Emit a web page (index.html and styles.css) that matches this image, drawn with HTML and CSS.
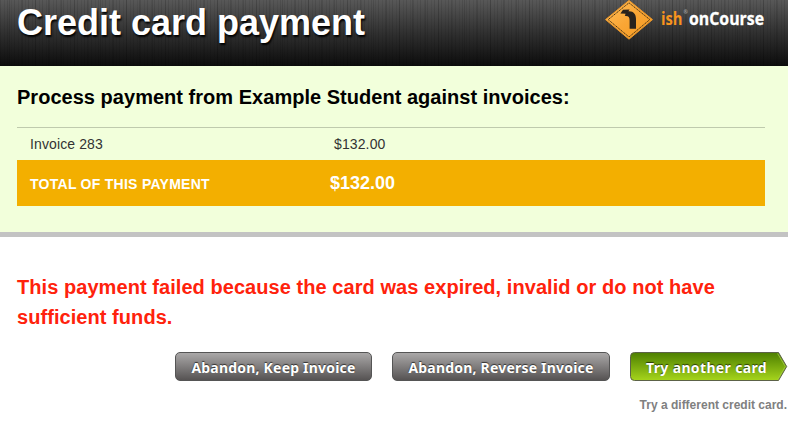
FILE: index.html
```html
<!DOCTYPE html>
<html lang="en">
<head>
<meta charset="utf-8">
<title>Credit card payment</title>
<link rel="stylesheet" href="styles.css">
</head>
<body>
<header class="header">
  <h1 class="title">Credit card payment</h1>
  <svg class="logo" width="166" height="44" viewBox="0 0 166 44" role="img" aria-label="ish onCourse">
    <defs>
      <linearGradient id="sign" x1="0" y1="0" x2="1" y2="1">
        <stop offset="0" stop-color="#ffc05c"/>
        <stop offset="0.5" stop-color="#faa635"/>
        <stop offset="1" stop-color="#f49a20"/>
      </linearGradient>
    </defs>
    <path d="M24 .8 47.5 20 24 39.6 .5 20Z" transform="translate(0 -.4)" fill="url(#sign)" stroke="#e8952a" stroke-width="1" stroke-linejoin="round"/>
    <path d="M24 2.8 44.8 19.6 24 37 3.2 19.6Z" fill="none" stroke="#4a3212" stroke-width="1" stroke-dasharray="1.5 .6"/>
    <path d="M15.4 13.4 18 9.8 24.6 9.4 23.4 11.2C28.4 10.8 31 14 31 19V28.8H24.6V20.5C24.6 17.4 23.6 16 21 16L19.8 15.8 20.6 13.8Z" fill="#29231d"/>
    <text class="logo-ish" x="56" y="25" textLength="21.5" lengthAdjust="spacingAndGlyphs">ish</text>
    <text class="logo-mark" x="78.4" y="13.5">®</text>
    <text class="logo-name" x="84" y="25" textLength="75" lengthAdjust="spacingAndGlyphs">onCourse</text>
  </svg>
</header>
<section class="summary">
  <h2 class="subtitle">Process payment from Example Student against invoices:</h2>
  <div class="row invoice"><span>Invoice 283</span><span class="amount">$132.00</span></div>
  <div class="row total"><span>TOTAL OF THIS PAYMENT</span><span class="amount">$132.00</span></div>
</section>
<main class="result">
  <p class="error">This payment failed because the card was expired, invalid or do not have sufficient funds.</p>
  <div class="actions">
    <button class="button keep">Abandon, Keep Invoice</button>
    <button class="button reverse">Abandon, Reverse Invoice</button>
    <button class="button retry">
      <svg class="arrow" width="158" height="30" viewBox="0 0 158 30" aria-hidden="true">
        <defs>
          <linearGradient id="green" x1="0" y1="0" x2="0" y2="1">
            <stop offset="0" stop-color="#4d7f00"/>
            <stop offset="1" stop-color="#a6d51c"/>
          </linearGradient>
        </defs>
        <path d="M4.5 .5H148.5L156.7 14.5 148.5 28.5H4.5Q.5 28.5 .5 24.5V4.5Q.5 .5 4.5 .5Z" fill="url(#green)" stroke="#5c6248"/>
        <path d="M147.6 1.5 155.3 14.5 147.6 27.5" fill="none" stroke="#a5cc45" stroke-width=".8"/>
      </svg>
      <span class="label">Try another card</span>
    </button>
  </div>
  <p class="hint">Try a different credit card.</p>
</main>
</body>
</html>
```
FILE: styles.css
```css
* { box-sizing: border-box; }
body {
  margin: 0;
  background: #fff;
  font-family: "Liberation Sans", Arial, sans-serif;
}
h1, h2, p { margin: 0; }
.header {
  display: flex;
  justify-content: space-between;
  height: 66px;
  padding: 0 17px;
  background:
    repeating-linear-gradient(90deg, rgba(0,0,0,.1) 0 1px, transparent 1px 4px, rgba(0,0,0,.07) 4px 5px, transparent 5px 7px),
    repeating-linear-gradient(90deg, transparent 0 9px, rgba(0,0,0,.12) 9px 10px, transparent 10px 13px),
    linear-gradient(#585858 0, #303030 50%, #0c0c0c 100%);
}
.title {
  color: #fff;
  font-size: 36px;
  line-height: 46px;
  text-shadow: 1px 2px 2px #000;
  white-space: nowrap;
}
.logo { display: block; }
.logo text { font-family: "Open Sans", sans-serif; font-weight: 700; font-size: 17.5px; }
.logo .logo-ish { fill: #f7941e; }
.logo .logo-name { fill: #fff; stroke: #fff; stroke-width: .3px; }
.logo .logo-mark { fill: #aaa; font-size: 5px; }
.summary {
  height: 171px;
  padding: 16px 23px 0 17px;
  background: #f2ffdb;
  border-bottom: 5px solid #c3c3c3;
}
.subtitle {
  height: 45px;
  color: #000;
  font-size: 20px;
  letter-spacing: .025px;
  line-height: 30px;
  white-space: nowrap;
}
.row {
  display: grid;
  grid-template-columns: 300px 1fr;
  align-items: center;
  padding-left: 13px;
}
.invoice {
  height: 33px;
  border-top: 1px solid #bfcaad;
  color: #333;
  font-size: 14px;
  letter-spacing: .12px;
}
.invoice .amount { padding-left: 4px; }
.total {
  height: 46px;
  padding-top: 1px;
  background: #f3af00;
  color: #fff;
  font-size: 14px;
  font-weight: 700;
  letter-spacing: .27px;
}
.total .amount { margin-top: -1px; font-size: 18px; letter-spacing: 0; }
.result { padding: 35px 1px 0 17px; }
.error {
  color: #ff220c;
  font-size: 20px;
  font-weight: 700;
  letter-spacing: .06px;
  line-height: 30px;
}
.actions {
  display: flex;
  justify-content: flex-end;
  gap: 20px;
  margin-top: 20px;
}
.button {
  height: 29px;
  padding: 2px 0 0;
  border: 1px solid #555;
  border-radius: 5px;
  background: linear-gradient(#aaa8a8, #565353);
  color: #fff;
  font: 700 14px/24px "Noto Sans", sans-serif;
  letter-spacing: .2px;
  text-align: center;
  text-shadow: 0 -1px 1px rgba(0,0,0,.65);
  white-space: nowrap;
}
.keep { width: 197px; }
.reverse { width: 218px; }
.retry {
  display: grid;
  width: 157px;
  padding: 0;
  border: 0;
  background: none;
  letter-spacing: .35px;
}
.retry > * { grid-area: 1 / 1; }
.label { padding: 4px 5px 0 0; z-index: 1; }
.hint {
  margin-top: 16px;
  color: #808080;
  font-size: 12px;
  font-weight: 700;
  line-height: 16px;
  text-align: right;
}
```
